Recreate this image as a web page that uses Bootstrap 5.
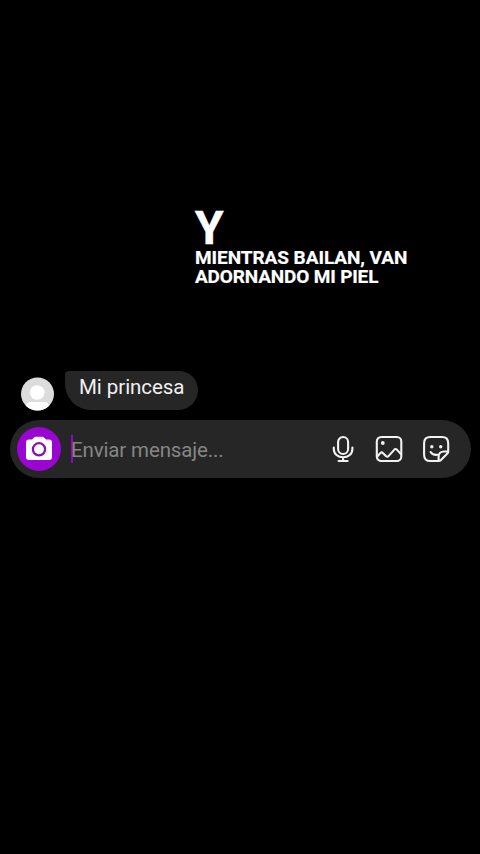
<!DOCTYPE html>
<html lang="es">
<head>
<meta charset="utf-8">
<meta name="viewport" content="width=device-width, initial-scale=1">
<title>Mensajes</title>
<link href="https://cdn.jsdelivr.net/npm/bootstrap@5.3.0/dist/css/bootstrap.min.css" rel="stylesheet">
<style>
body{background:#000;font-family:Roboto,"Liberation Sans",sans-serif}
.screen{width:480px;height:854px;padding-top:206px}
.lyrics{height:165px;padding-left:195px;color:#fff;font-weight:700}
.lyric-lead{font-size:46px;line-height:45px;height:41.500px;-webkit-text-stroke:.6px #fff}
.lyric-text{font-size:19px;line-height:19.5px;letter-spacing:-.06px;-webkit-text-stroke:.2px #fff}
.lyric-text div+div{letter-spacing:-.16px}
.message{height:40px;padding-left:21px;gap:11px}
.bubble{width:133px;height:39px;padding-left:14px;background:#262626;color:#f1f1f1;border-radius:4px 19px 20px 26px;font-size:20.5px;letter-spacing:-.06px;line-height:33px}
.composer{width:461px;height:58px;margin:9px 0 0 10px;padding-left:7px;padding-right:21.500px;background:#262626}
.camera{width:44px;height:44px;background:#9a05d2}
.camera svg{margin-bottom:1px}
.caret{width:2px;height:28px;margin-left:10px;background:#8d08c4}
.hint{margin-left:-2px;color:#858585;font-size:20.5px;letter-spacing:-.14px;line-height:28px;padding-top:1px}
.tools{gap:18.500px}
</style>
</head>
<body>
<main class="screen d-flex flex-column overflow-hidden">
  <section class="lyrics">
    <div class="lyric-lead">Y</div>
    <div class="lyric-text text-nowrap"><div>MIENTRAS BAILAN, VAN</div><div>ADORNANDO MI PIEL</div></div>
  </section>
  <section class="message d-flex align-items-end">
    <svg width="33" height="34" viewBox="0 0 33 34" aria-hidden="true">
      <defs><clipPath id="face"><circle cx="16.5" cy="17" r="16.5"/></clipPath></defs>
      <g clip-path="url(#face)"><path fill="#dcdcdc" d="M0 0h33v34H0z"/><circle cx="16.2" cy="15.5" r="7.3" fill="#fff"/><path fill="#fff" d="M5 34v-4q0-5 5-5h13q5 0 5 5v4z"/></g>
    </svg>
    <div class="bubble text-nowrap align-self-start">Mi princesa</div>
  </section>
  <section class="composer rounded-pill d-flex align-items-center">
    <div class="camera rounded-circle d-flex align-items-center justify-content-center flex-shrink-0">
      <svg width="28" height="26" viewBox="0 0 28 26" aria-hidden="true"><path fill="#fff" d="M4 3.600H7L9 1.400Q9.800.7 10.800.7h6.400q1 0 1.800.7l2 2.200h3q3 0 3 3v14.300q0 3-3 3H4q-3 0-3-3V6.600q0-3 3-3z"/><circle cx="14" cy="13.300" r="6.100" fill="none" stroke="#8615ae" stroke-width="2.300"/></svg>
    </div>
    <div class="caret flex-shrink-0"></div>
    <div class="hint text-nowrap">Enviar mensaje...</div>
    <div class="tools d-flex ms-auto">
      <svg width="28" height="28" viewBox="0 0 28 28" fill="none" stroke="#f2f2f2" stroke-width="2.100" stroke-linecap="round" aria-hidden="true"><rect x="9.100" y="2" width="10" height="17" rx="5"/><path d="M4.800 12.500v1.500c0 5 4 8.300 9.300 8.300s9.300-3.300 9.300-8.300v-1.500M14.100 22.300v3.300M9.600 26h9"/></svg>
      <svg width="28" height="28" viewBox="0 0 28 28" fill="none" stroke="#f2f2f2" stroke-width="2.100" stroke-linejoin="round" aria-hidden="true"><rect x="1.800" y="2" width="24.500" height="24" rx="4.500"/><circle cx="7.800" cy="8" r="1.900" fill="#f2f2f2" stroke="none"/><path d="M2.300 21.500l3.200-3.600q1.200-1.100 2.300 0l3.400 3.400q1.200 1 2.300-.2l5.900-6.500q1.200-1.200 2.400 0l4.300 4.700"/></svg>
      <svg width="28" height="28" viewBox="0 0 28 28" fill="none" stroke="#f2f2f2" stroke-width="2.100" stroke-linecap="round" stroke-linejoin="round" aria-hidden="true"><path d="M16.600 26H8.300Q2.100 26 2.100 19.800V8.200Q2.100 2 8.300 2H20q6.200 0 6.200 6.200v8.300q0 1.200-.8 2l-6.700 6.700q-.8.800-2.100.8zM16.600 26v-4q0-5.500 5.500-5.500h4.100M8.600 17c1.500 2.500 4.800 3.400 8.400 2.500"/><circle cx="9.800" cy="11.800" r="1.700" fill="#f2f2f2" stroke="none"/><circle cx="18.700" cy="11.800" r="1.700" fill="#f2f2f2" stroke="none"/></svg>
    </div>
  </section>
</main>
<script src="https://cdn.jsdelivr.net/npm/bootstrap@5.3.0/dist/js/bootstrap.bundle.min.js"></script>
</body>
</html>
